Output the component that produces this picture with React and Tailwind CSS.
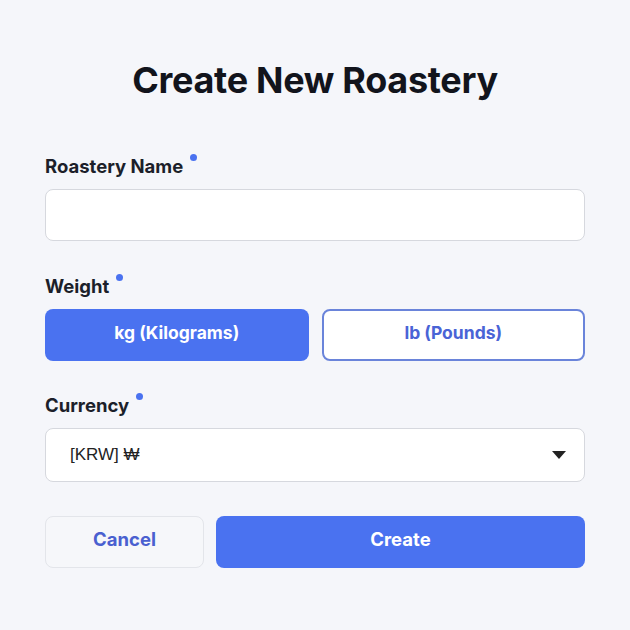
import React, { useState } from 'react';

const Label = ({ children }) => (
    <div className="flex items-start text-[18.5px] font-bold text-[#1c1f2a] leading-[18px]">
        <span>{children}</span>
        <span className="ml-[7px] -mt-[3px] w-[7px] h-[7px] rounded-full bg-[#4a72f0]" />
    </div>
);

export default function App() {
    const [unit, setUnit] = useState('kg');

    return (
        <div className="w-[630px] h-[630px] bg-[#f5f6fa] font-['Inter','Noto_Sans',sans-serif] px-[45px] pt-[60px]">
            <h1 className="text-center text-[36px] font-bold text-[#12141c] tracking-[-0.3px] leading-10">
                Create New Roastery
            </h1>

            <div className="mt-[57px]">
                <Label>Roastery Name</Label>
                <input
                    type="text"
                    className="mt-[14px] w-full h-[52px] rounded-lg border border-[#d6d8de] bg-white px-6 outline-none"
                />
            </div>

            <div className="mt-[36px]">
                <Label>Weight</Label>
                <div className="mt-[14px] grid grid-cols-2 gap-[13px]">
                    <button
                        onClick={() => setUnit('kg')}
                        className={`h-[52px] pb-[4px] rounded-lg text-[17.5px] font-bold ${unit === 'kg'
                            ? 'bg-[#4a72f0] text-white'
                            : 'bg-white border-2 border-[#6a84da] text-[#4a64d6]'
                            }`}
                    >
                        kg (Kilograms)
                    </button>
                    <button
                        onClick={() => setUnit('lb')}
                        className={`h-[52px] pb-[4px] rounded-lg text-[17.5px] font-bold ${unit === 'lb'
                            ? 'bg-[#4a72f0] text-white'
                            : 'bg-white border-2 border-[#6a84da] text-[#4a64d6]'
                            }`}
                    >
                        lb (Pounds)
                    </button>
                </div>
            </div>

            <div className="mt-[35px]">
                <Label>Currency</Label>
                <div className="mt-[14px] h-[54px] rounded-lg border border-[#d6d8de] bg-white flex items-center pl-[24px] pr-[18px]">
                    <span className="flex-1 font-['Liberation_Sans',sans-serif] text-[17px] text-[#222]">[KRW] ₩</span>
                    <svg width="14" height="8" viewBox="0 0 14 8">
                        <path d="M0 0 L14 0 L7 8 Z" fill="#222" />
                    </svg>
                </div>
            </div>

            <div className="mt-[34px] flex gap-[12px]">
                <button className="w-[159px] h-[52px] pb-[4px] rounded-lg border border-[#e3e5ea] bg-[#f6f7fa] text-[18.5px] font-bold text-[#4a60d0]">
                    Cancel
                </button>
                <button className="flex-1 h-[52px] pb-[4px] rounded-lg bg-[#4a72f0] text-[18.5px] font-bold text-white">
                    Create
                </button>
            </div>
        </div>
    );
}
